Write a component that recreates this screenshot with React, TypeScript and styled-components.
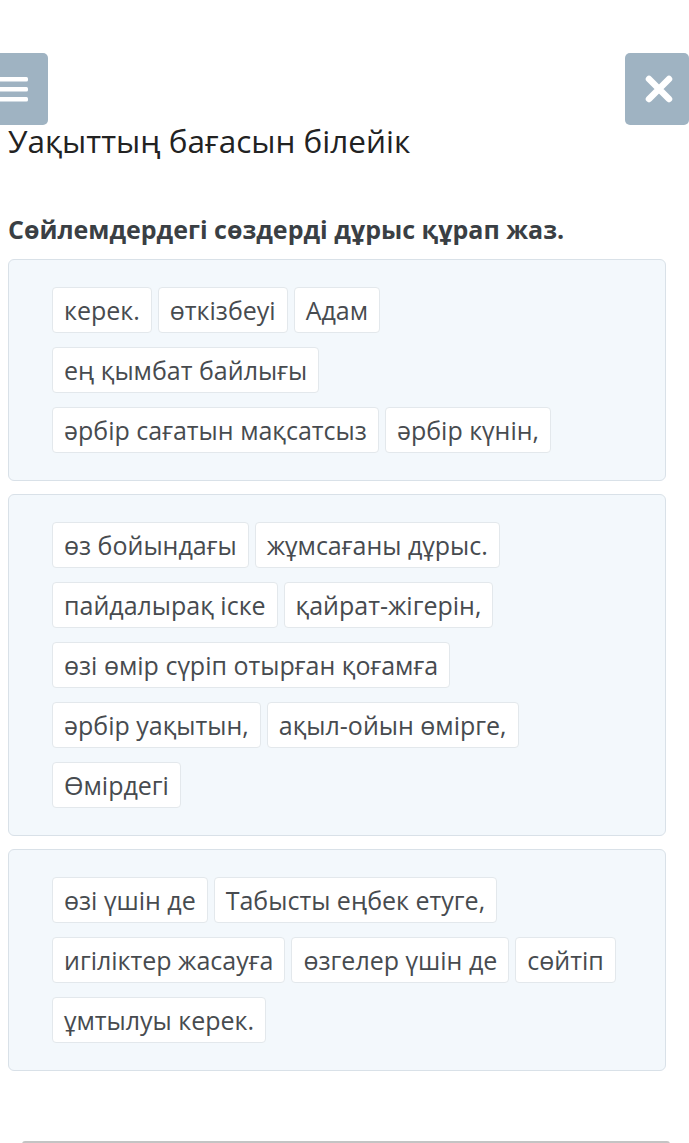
import React from 'react';
import styled, { createGlobalStyle } from 'styled-components';

const GlobalStyle = createGlobalStyle`
  html, body {
    margin: 0;
    padding: 0;
    background: #fff;
    overflow: hidden;
  }
  body {
    font-family: 'Open Sans', 'Noto Sans', sans-serif;
  }
`;

const Page = styled.div`
  width: 689px;
  height: 1143px;
  overflow: hidden;
  display: flex;
  flex-direction: column;
`;

const TopBar = styled.div`
  display: flex;
  justify-content: space-between;
  margin-top: 53px;
  height: 72px;
`;

const SquareButton = styled.div<{ $side: 'left' | 'right' }>`
  width: 64px;
  height: 72px;
  background: #9fb3c2;
  border-radius: 5px;
  display: flex;
  align-items: center;
  justify-content: ${(p) => (p.$side === 'left' ? 'flex-end' : 'flex-start')};
  margin-left: ${(p) => (p.$side === 'left' ? '-16px' : '0')};
  padding: ${(p) => (p.$side === 'left' ? '0 20px 0 0' : '0 0 0 19px')};
  box-sizing: border-box;
`;

const Title = styled.h1`
  margin: 0;
  padding: 0 8px;
  font-size: 31.5px;
  line-height: 32px;
  font-weight: 400;
  color: #222;
`;

const Instruction = styled.h2`
  margin: 57px 0 0;
  padding: 0 8px;
  font-size: 25px;
  line-height: 30px;
  font-weight: 700;
  color: #3a3f44;
`;

const Cards = styled.div`
  display: flex;
  flex-direction: column;
  gap: 13px;
  margin-top: 15px;
  padding: 0 23px 0 8px;
`;

const Card = styled.div`
  background: #f3f8fc;
  border: 1px solid #d9e1e8;
  border-radius: 6px;
  padding: 27px 20px 27px 43px;
  display: flex;
  flex-direction: column;
  gap: 14px;
`;

const Row = styled.div`
  display: flex;
  gap: 6px;
`;

const Chip = styled.div`
  background: #fff;
  border: 1px solid #e3e8ec;
  border-radius: 4px;
  height: 46px;
  box-sizing: border-box;
  padding: 0 11px;
  display: flex;
  align-items: center;
  font-size: 25px;
  color: #474b4f;
  white-space: nowrap;
`;

const BottomBar = styled.div`
  margin: 70px 19px 0 22px;
  height: 40px;
  border-top: 3px solid #c4c4c4;
  border-radius: 4px 4px 0 0;
`;

const MenuIcon = () => (
  <svg width="30" height="28" viewBox="0 0 30 28">
    <rect x="0" y="2" width="30" height="4.5" rx="1.5" fill="#fff" />
    <rect x="0" y="12" width="30" height="4.5" rx="1.5" fill="#fff" />
    <rect x="0" y="22" width="30" height="4.5" rx="1.5" fill="#fff" />
  </svg>
);

const CloseIcon = () => (
  <svg width="30" height="30" viewBox="0 0 30 30">
    <path d="M5 5 L25 25 M25 5 L5 25" stroke="#fff" strokeWidth="6.5" strokeLinecap="round" />
  </svg>
);

const groups: string[][][] = [
  [['керек.', 'өткізбеуі', 'Адам'], ['ең қымбат байлығы'], ['әрбір сағатын мақсатсыз', 'әрбір күнін,']],
  [
    ['өз бойындағы', 'жұмсағаны дұрыс.'],
    ['пайдалырақ іске', 'қайрат-жігерін,'],
    ['өзі өмір сүріп отырған қоғамға'],
    ['әрбір уақытын,', 'ақыл-ойын өмірге,'],
    ['Өмірдегі'],
  ],
  [['өзі үшін де', 'Табысты еңбек етуге,'], ['игіліктер жасауға', 'өзгелер үшін де', 'сөйтіп'], ['ұмтылуы керек.']],
];

export default function App() {
  return (
    <Page>
      <GlobalStyle />
      <TopBar>
        <SquareButton $side="left">
          <MenuIcon />
        </SquareButton>
        <SquareButton $side="right">
          <CloseIcon />
        </SquareButton>
      </TopBar>
      <Title>Уақыттың бағасын білейік</Title>
      <Instruction>Сөйлемдердегі сөздерді дұрыс құрап жаз.</Instruction>
      <Cards>
        {groups.map((rows, gi) => (
          <Card key={gi}>
            {rows.map((row, ri) => (
              <Row key={ri}>
                {row.map((w) => (
                  <Chip key={w}>{w}</Chip>
                ))}
              </Row>
            ))}
          </Card>
        ))}
      </Cards>
      <BottomBar />
    </Page>
  );
}
